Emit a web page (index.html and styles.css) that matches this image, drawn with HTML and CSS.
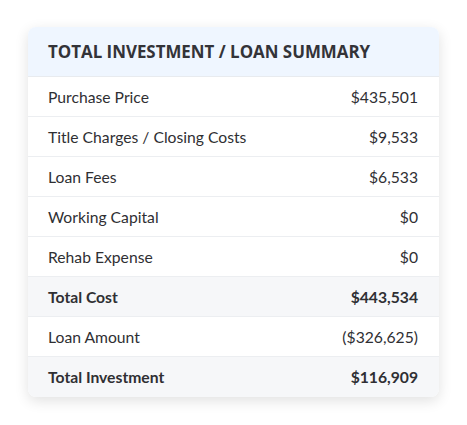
FILE: index.html
```html
<!DOCTYPE html>
<html>
<head>
<meta charset="utf-8">
<link rel="stylesheet" href="styles.css">
</head>
<body>
<div class="card">
  <div class="card-header">TOTAL INVESTMENT / LOAN SUMMARY</div>
  <div class="row"><span>Purchase Price</span><span>$435,501</span></div>
  <div class="row"><span>Title Charges / Closing Costs</span><span>$9,533</span></div>
  <div class="row"><span>Loan Fees</span><span>$6,533</span></div>
  <div class="row"><span>Working Capital</span><span>$0</span></div>
  <div class="row"><span>Rehab Expense</span><span>$0</span></div>
  <div class="row total"><span>Total Cost</span><span>$443,534</span></div>
  <div class="row"><span>Loan Amount</span><span>($326,625)</span></div>
  <div class="row total last"><span>Total Investment</span><span>$116,909</span></div>
</div>
</body>
</html>
```
FILE: styles.css
```css
html, body { margin: 0; padding: 0; background: #fff; }
body {
  min-height: 425px;
  box-sizing: border-box;
  padding: 27px 28px 0 28px;
  font-family: Lato, "Liberation Sans", sans-serif;
  color: #2f2f33;
}
.card {
  width: 411px;
  border-radius: 8px;
  background: #fff;
  box-shadow: 0 4px 14px rgba(0,0,0,0.12);
  overflow: hidden;
}
.card-header {
  height: 50px;
  box-sizing: border-box;
  display: flex;
  align-items: center;
  padding: 0 20px;
  background: #eff6ff;
  font-family: "Open Sans", sans-serif;
  font-weight: 700;
  font-size: 16.9px;
  color: #333338;
  border-bottom: 1px solid #e8ebef;
}
.row {
  height: 40px;
  box-sizing: border-box;
  display: flex;
  align-items: center;
  justify-content: space-between;
  padding: 0 21px 0 20px;
  font-size: 15.7px;
  border-bottom: 1px solid #eceef1;
}
.row.last { border-bottom: none; }
.row.total { background: #f6f7f9; font-weight: 700; }
```
